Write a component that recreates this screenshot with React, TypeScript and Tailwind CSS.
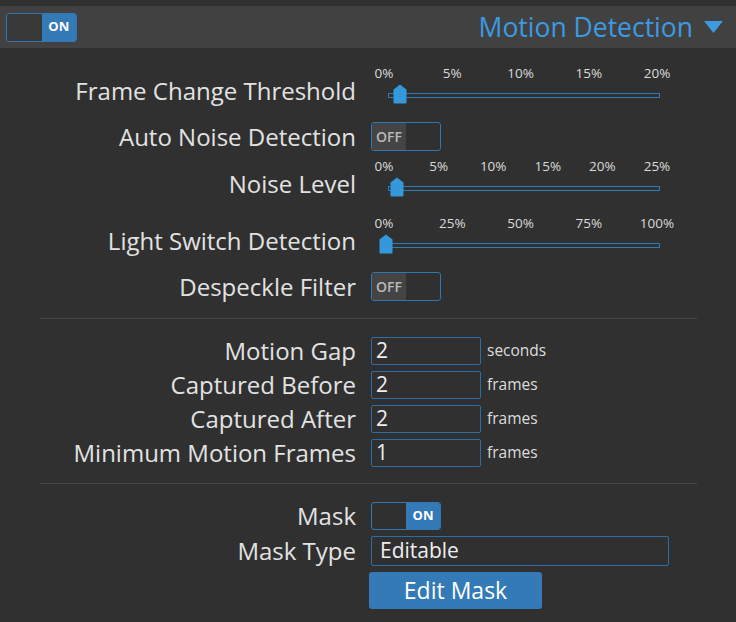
import type { ReactNode } from "react";

const font = { fontFamily: '"Open Sans", "Noto Sans", sans-serif' };

function Toggle({ on }: { on: boolean }) {
  return (
    <div className="flex h-[29px] w-[70px] overflow-hidden rounded-[3px] border border-[#2f78b3]">
      {on ? (
        <>
          <div className="w-1/2" />
          <div className="flex w-1/2 items-center justify-center bg-[#337ab7] text-[13px] font-bold text-white">
            ON
          </div>
        </>
      ) : (
        <>
          <div className="flex w-1/2 items-center justify-center bg-[#444444] text-[14px] font-semibold text-[#b8b8b8]">
            OFF
          </div>
          <div className="w-1/2" />
        </>
      )}
    </div>
  );
}

function Slider({ ticks, thumb }: { ticks: string[]; thumb: number }) {
  return (
    <div className="w-[300px]">
      <div className="flex h-[18px] items-center justify-between pl-[13px] pr-[14px]">
        {ticks.map((t) => (
          <div key={t} className="flex w-0 justify-center">
            <span className="whitespace-nowrap text-[13.5px] leading-none text-[#dadada]">{t}</span>
          </div>
        ))}
      </div>
      <div className="relative h-[24px] pt-[10px]">
        <div className="ml-[17px] h-[5px] w-[272px] border border-[#2f7ab8]" />
        <svg
          className="absolute top-[1px]"
          style={{ left: thumb - 7 }}
          width="14"
          height="20"
          viewBox="0 0 14 20"
        >
          <path d="M7 0.5 L13.5 5.5 V18.5 Q13.5 19.5 12.5 19.5 H1.5 Q0.5 19.5 0.5 18.5 V5.5 Z" fill="#3498db" />
        </svg>
      </div>
    </div>
  );
}

function Row({
  label,
  children,
  slider,
  className = "",
}: {
  label: string;
  children: ReactNode;
  slider?: boolean;
  className?: string;
}) {
  return (
    <div className={`flex ${slider ? "items-end" : "items-center"} ${className}`}>
      <div
        className={`w-[356px] shrink-0 text-right text-[24px] leading-[28px] text-[#e2e2e2] ${slider ? "mb-[2px]" : ""}`}
      >
        {label}
      </div>
      <div className="ml-[15px]">{children}</div>
    </div>
  );
}

function NumberField({ value, unit }: { value: string; unit: string }) {
  return (
    <div className="flex items-center">
      <div className="flex h-[28px] w-[110px] items-center rounded-[2px] border border-[#2c6fa6] px-[4px] text-[21px] text-[#eeeeee]">
        {value}
      </div>
      <span className="ml-[6px] text-[15.5px] text-[#dddddd]">{unit}</span>
    </div>
  );
}

export default function App() {
  return (
    <div className="min-h-[622px] w-[736px] bg-[#303030] pt-[6px]" style={font}>
      <div className="flex h-[42px] items-center justify-between bg-[#414141] pl-[6px] pr-[13px]">
        <div className="flex h-[29px] w-[71px] overflow-hidden rounded-[3px] border border-[#2f78b3]">
          <div className="w-1/2 bg-[#383838]" />
          <div className="flex w-1/2 items-center justify-center bg-[#337ab7] text-[13px] font-bold text-white">
            ON
          </div>
        </div>
        <div className="flex items-center">
          <span className="text-[26.5px] leading-none text-[#3d9ae0]">Motion Detection</span>
          <svg className="ml-[11px]" width="19" height="12" viewBox="0 0 19 12">
            <path d="M0 0 H19 L9.5 12 Z" fill="#3d9ae0" />
          </svg>
        </div>
      </div>

      <Row label="Frame Change Threshold" slider className="mt-[17px]">
        <Slider ticks={["0%", "5%", "10%", "15%", "20%"]} thumb={29} />
      </Row>
      <Row label="Auto Noise Detection" className="mt-[15px]">
        <Toggle on={false} />
      </Row>
      <Row label="Noise Level" slider className="mt-[7px]">
        <Slider ticks={["0%", "5%", "10%", "15%", "20%", "25%"]} thumb={26} />
      </Row>
      <Row label="Light Switch Detection" slider className="mt-[15px]">
        <Slider ticks={["0%", "25%", "50%", "75%", "100%"]} thumb={15} />
      </Row>
      <Row label="Despeckle Filter" className="mt-[15px]">
        <Toggle on={false} />
      </Row>

      <div className="ml-[40px] mr-[39px] mt-[17px] h-px bg-[#464646]" />

      <div className="mt-[18px] flex flex-col gap-[6px]">
        <Row label="Motion Gap">
          <NumberField value="2" unit="seconds" />
        </Row>
        <Row label="Captured Before">
          <NumberField value="2" unit="frames" />
        </Row>
        <Row label="Captured After">
          <NumberField value="2" unit="frames" />
        </Row>
        <Row label="Minimum Motion Frames">
          <NumberField value="1" unit="frames" />
        </Row>
      </div>

      <div className="ml-[40px] mr-[39px] mt-[16px] h-px bg-[#464646]" />

      <div className="mt-[18px] flex flex-col gap-[6px]">
        <Row label="Mask">
          <div className="flex h-[28px] w-[70px] overflow-hidden rounded-[3px] border border-[#2f78b3]">
            <div className="w-1/2" />
            <div className="flex w-1/2 items-center justify-center bg-[#337ab7] text-[13px] font-bold text-white">
              ON
            </div>
          </div>
        </Row>
        <Row label="Mask Type">
          <div className="flex h-[30px] w-[298px] items-center rounded-[2px] border border-[#2c6fa6] pl-[8px] text-[21px] text-[#eeeeee]">
            Editable
          </div>
        </Row>
        <div className="ml-[369px]">
          <button
            type="button"
            className="h-[37px] w-[173px] rounded-[3px] bg-[#337ab7] text-[23px] text-white"
          >
            Edit Mask
          </button>
        </div>
      </div>
    </div>
  );
}
